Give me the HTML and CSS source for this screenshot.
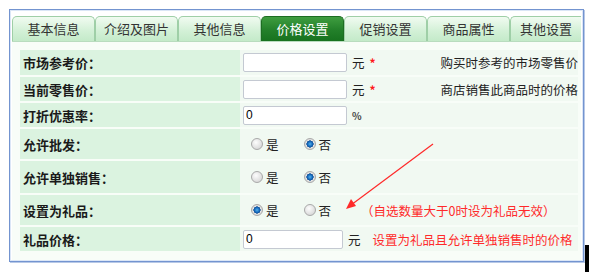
FILE: index.html
```html
<!DOCTYPE html>
<html lang="zh-CN">
<head>
  <meta charset="UTF-8" />
  <meta name="viewport" content="width=device-width, initial-scale=1.0" />
  <title>价格设置</title>
  <link rel="stylesheet" href="styles.css">
</head>
<body>
  <div class="frame">
    <ul class="tabs">
      <li class="tab">基本信息</li>
      <li class="tab">介绍及图片</li>
      <li class="tab">其他信息</li>
      <li class="tab active">价格设置</li>
      <li class="tab">促销设置</li>
      <li class="tab">商品属性</li>
      <li class="tab last">其他设置</li>
    </ul>

    <div class="panel">
      <div class="form">
        <div class="label">市场参考价：</div>
        <div class="value">
          <input class="text-input" type="text" value="">
          <span class="unit">元</span><span class="req">*</span>
          <span class="hint">购买时参考的市场零售价</span>
        </div>

        <div class="label">当前零售价：</div>
        <div class="value">
          <input class="text-input" type="text" value="">
          <span class="unit">元</span><span class="req">*</span>
          <span class="hint">商店销售此商品时的价格</span>
        </div>

        <div class="label">打折优惠率：</div>
        <div class="value">
          <input class="text-input" type="text" value="0">
          <span class="unit percent">%</span>
        </div>

        <div class="label">允许批发：</div>
        <div class="value radios">
          <span class="radio"></span><span class="radio-text">是</span>
          <span class="radio checked"></span><span class="radio-text">否</span>
        </div>

        <div class="label">允许单独销售：</div>
        <div class="value radios">
          <span class="radio"></span><span class="radio-text">是</span>
          <span class="radio checked"></span><span class="radio-text">否</span>
        </div>

        <div class="label">设置为礼品：</div>
        <div class="value radios">
          <span class="radio checked"></span><span class="radio-text">是</span>
          <span class="radio"></span><span class="radio-text">否</span>
          <span class="note gift-note">（自选数量大于0时设为礼品无效）</span>
        </div>

        <div class="label">礼品价格：</div>
        <div class="value">
          <input class="text-input short" type="text" value="0">
          <span class="unit">元</span>
          <span class="note price-note">设置为礼品且允许单独销售时的价格</span>
        </div>
      </div>

      <svg class="arrow" width="100" height="76" viewBox="0 0 100 76">
        <line x1="91" y1="4" x2="9" y2="65" stroke="#ff2a2a" stroke-width="1.2" />
        <polygon points="4,69 14,66 9,59" fill="#ff2a2a" />
      </svg>
    </div>
  </div>
  <div class="edge"></div>
</body>
</html>
```

FILE: styles.css
```css
body {
  margin: 0;
  height: 100vh;
  background: #fff;
  display: flex;
  font-family: "Noto Sans CJK SC", "Noto Sans", sans-serif;
  font-size: 12.5px;
  color: #222;
  overflow: hidden;
}
.frame {
  box-sizing: border-box;
  width: 575px;
  height: 253px;
  margin: 9px 0 0 9px;
  padding: 6px 2px 1px 2px;
  border: 1px solid #7394d0;
  box-shadow: inset 0 0 0 1px #dbe6f6, 1px 1px 0 #b7c8e6;
  background: #fff;
  display: flex;
  flex-direction: column;
}
.tabs {
  list-style: none;
  margin: 0;
  padding: 0;
  display: flex;
  height: 25px;
  border-bottom: 1px solid #b9dcbf;
}
.tab {
  box-sizing: border-box;
  width: 83px;
  flex: none;
  height: 25px;
  line-height: 24px;
  font-size: 13px;
  text-align: center;
  color: #333;
  background: linear-gradient(#f1fbf1, #d2f0d6 60%, #c4eac9);
  border: 1px solid #9fcfa7;
  border-bottom: none;
  border-radius: 5px 5px 0 0;
}
.tab.last {
  width: 71px;
  border-right: none;
  border-top-right-radius: 0;
}
.tab.active {
  color: #fff;
  background: linear-gradient(#3f9d40, #23802a 55%, #17721f);
  border-color: #1d6d22;
}
.panel {
  position: relative;
  flex: 1;
  background: #f8fdf8;
  padding: 8px 3px 0 8px;
}
.form {
  display: grid;
  grid-template-columns: 220px 1fr;
  grid-template-rows: 25px 24px 24px 30px 32px 30px 24px;
  row-gap: 2px;
}
.label {
  background: #dbf3e0;
  font-weight: bold;
  font-size: 13px;
  color: #1a1a1a;
  padding-left: 3px;
  display: flex;
  align-items: center;
}
.value {
  background: #f1f9f2;
  display: flex;
  align-items: center;
  padding-left: 3px;
  white-space: nowrap;
}
.text-input {
  box-sizing: border-box;
  width: 104px;
  height: 19px;
  margin: 0;
  padding: 0 2px;
  border: 1px solid #c4c9d2;
  border-radius: 2px;
  background: #fff;
  font-family: "Liberation Sans", sans-serif;
  font-size: 12px;
  color: #000;
  outline: none;
}
.text-input.short {
  width: 100px;
}
.unit {
  margin-left: 5px;
}
.unit.percent {
  font-size: 10px;
  font-weight: bold;
  color: #444;
}
.req {
  margin-left: 5px;
  color: #ff1a1a;
  font-weight: bold;
  font-size: 12px;
}
.hint {
  margin-left: auto;
  color: #222;
}
.radios {
  padding-left: 11px;
}
.radio {
  box-sizing: border-box;
  width: 12px;
  height: 12px;
  border-radius: 50%;
  border: 1px solid #a9a9a9;
  background: radial-gradient(circle at 40% 35%, #fdfdfd, #dcdcdc 70%, #c8c8c8);
  flex: none;
}
.radio.checked {
  background: radial-gradient(circle, #4fb2ee 0, #1565b8 2.5px, #0f4d90 3.4px, #e6e6e6 3.8px, #d2d2d2 6px);
}
.radio-text {
  margin-left: 3px;
  margin-right: 25px;
}
.note {
  color: #ff2a2a;
}
.gift-note {
  margin-left: 5px;
}
.price-note {
  margin-left: 12px;
}
.arrow {
  position: absolute;
  left: 330px;
  top: 98px;
}
.edge {
  align-self: flex-end;
  width: 5px;
  height: 27px;
  margin-left: 1px;
  background: #000;
}
```
